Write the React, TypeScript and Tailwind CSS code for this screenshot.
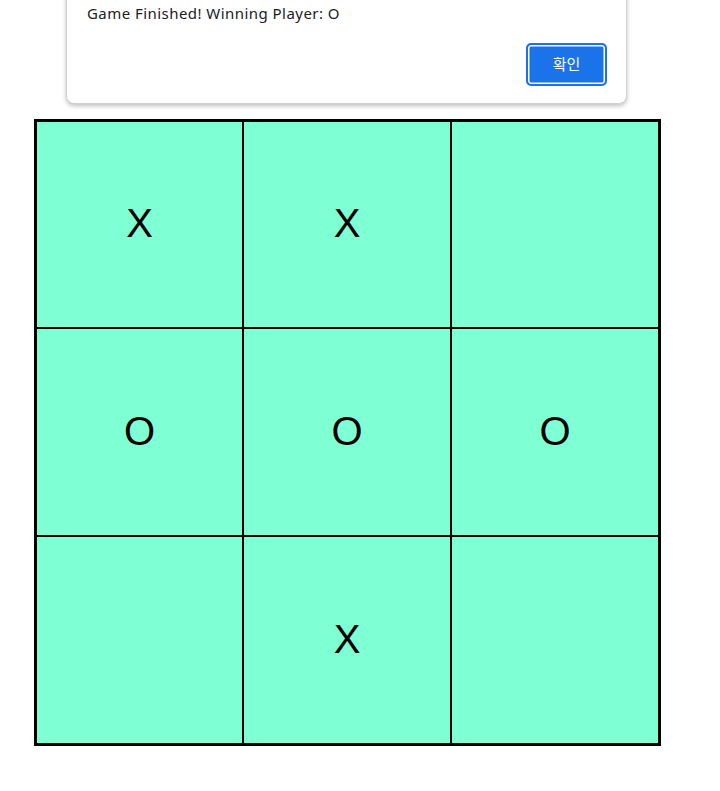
import React from 'react';

const board = ['X', 'X', '', 'O', 'O', 'O', '', 'X', ''];

// alert box that sits over the page, cut off at the top
const AlertBox = () => (
    <div className="absolute left-[66px] top-[-40px] w-[561px] h-[144px] bg-white rounded-[8px] border border-[#d0d0d0] shadow-[0_2px_4px_rgba(0,0,0,0.25)]">
        <p
            className="absolute left-[20px] top-[41px] text-[15px] leading-[22px] tracking-[0.45px] text-[#202124]"
            style={{ fontFamily: '"Noto Sans", "Noto Sans CJK KR", sans-serif' }}
        >
            Game Finished! Winning Player: O
        </p>
        <button
            className="absolute left-[459px] top-[82px] w-[81px] h-[43px] rounded-[5px] bg-[#1a73e8] border-2 border-[#1a73e8] text-white text-[15px] flex items-center justify-center"
            style={{ fontFamily: '"Noto Sans CJK KR", sans-serif', boxShadow: 'inset 0 0 0 1.5px #ffffff' }}
        >
            확인
        </button>
    </div>
);

const App = () => {
    return (
        <div className="relative w-[720px] h-[791px] bg-white overflow-hidden">
            <AlertBox />
            <div className="pt-[119px] pl-[34px]">
                <div className="w-[627px] h-[627px] border-2 border-black grid grid-cols-[207px_208px_208px] grid-rows-[207px_208px_208px]">
                    {board.map((v, i) => (
                        <div
                            key={i}
                            className="border border-black bg-[#7fffd4] flex items-center justify-center pb-[3px] text-[40px] text-black"
                            style={{ fontFamily: '"Liberation Sans", Arial, sans-serif' }}
                        >
                            {v}
                        </div>
                    ))}
                </div>
            </div>
        </div>
    );
};

export default App;
